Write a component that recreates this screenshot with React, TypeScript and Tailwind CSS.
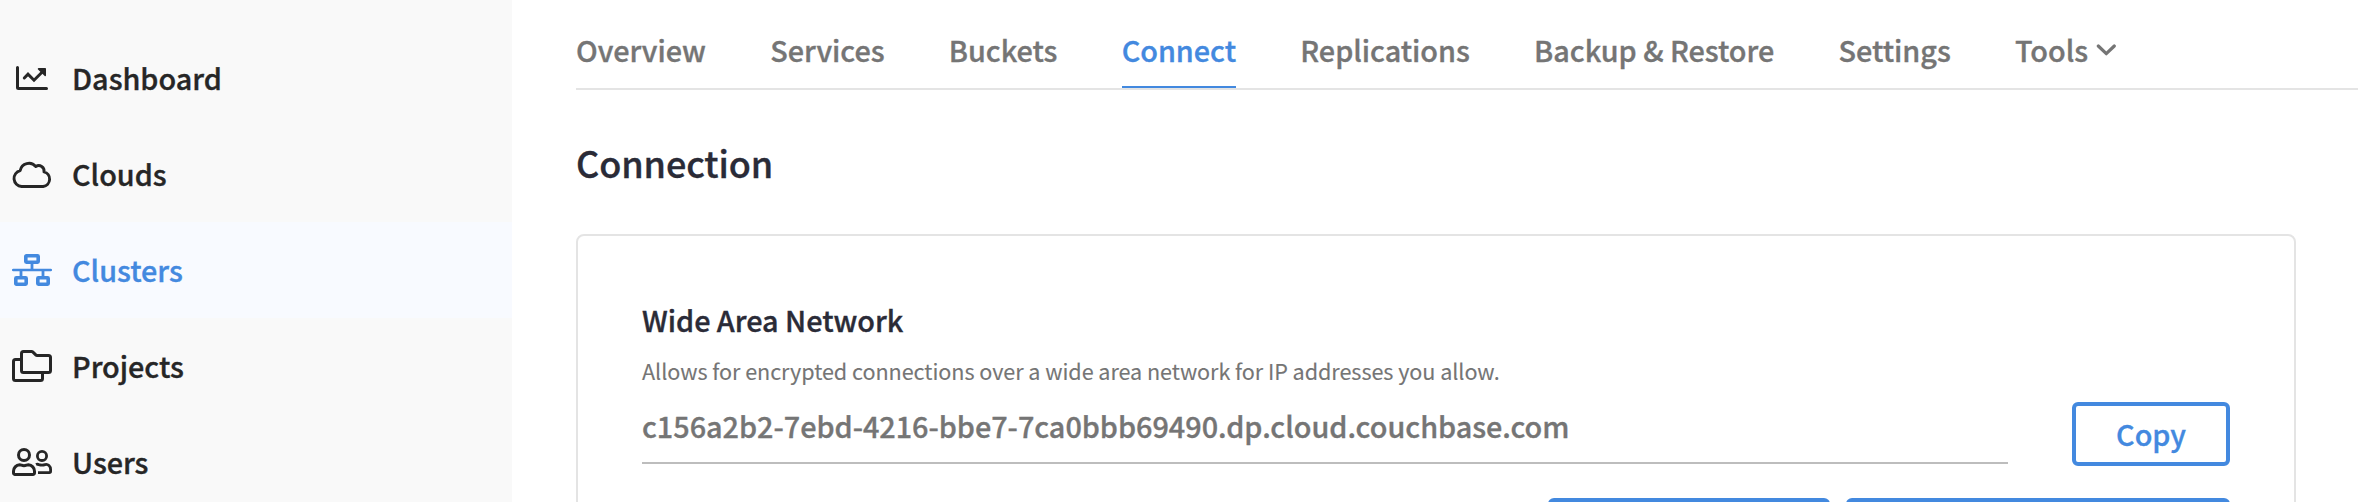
import type { ReactNode } from "react";

function DashboardIcon() {
  return (
    <svg width="32" height="24" viewBox="0 0 32 24" fill="none" stroke="currentColor" strokeWidth="3" strokeLinecap="round" strokeLinejoin="round">
      <path d="M1.5 1.5V21.500a1 1 0 0 0 1 1H30.500" />
      <path d="M8.300 12 12 8.200l6 6L27 5.200" strokeLinejoin="miter" />
      <path d="M22.600 2h6.600a.8.8 0 0 1 .8.8v6.800c0 .7-.8 1-1.300.5l-6.700-6.700c-.5-.5-.1-1.400.600-1.400z" fill="currentColor" stroke="none" />
    </svg>
  );
}

function CloudIcon() {
  return (
    <svg width="40" height="28" viewBox="0 0 40 28" fill="none" stroke="currentColor" strokeWidth="2.9" strokeLinejoin="round">
      <path d="M9.600 26.500A8.070 8.070 0 0 1 8.200 10.600A8.900 8.900 0 0 1 23.800 6.600A5.300 5.300 0 0 1 32 11.900A7.450 7.450 0 0 1 31.200 26.500Z" />
    </svg>
  );
}

function ClustersIcon() {
  return (
    <svg width="40" height="32" viewBox="0 0 40 32" fill="none" stroke="currentColor" strokeWidth="3.6">
      <rect x="13.8" y="1.8" width="12.4" height="6.4" rx="0.6" />
      <rect x="3.8" y="23.8" width="10.4" height="6.4" rx="0.6" />
      <rect x="25.8" y="23.8" width="10.4" height="6.4" rx="0.6" />
      <path d="M20 10v5M9 16v7M31 16v7" strokeWidth="2.8" />
      <path d="M1.200 16h37.600" strokeWidth="2.6" strokeLinecap="round" />
    </svg>
  );
}

function ProjectsIcon() {
  return (
    <svg width="40" height="32" viewBox="0 0 40 32" fill="none" stroke="currentColor" strokeWidth="3" strokeLinejoin="round">
      <path d="M11.500 1.500h8.200a1.500 1.500 0 0 1 1 .4l3.300 3.200a1.500 1.500 0 0 0 1 .4h11.500a2 2 0 0 1 2 2v13a2 2 0 0 1-2 2h-25a2 2 0 0 1-2-2v-17a2 2 0 0 1 2-2z" />
      <path d="M8.500 9.500h-5a2 2 0 0 0-2 2v17a2 2 0 0 0 2 2h25a2 2 0 0 0 2-2V23.500" />
    </svg>
  );
}

function UsersIcon() {
  return (
    <svg width="40" height="28" viewBox="0 0 40 28" fill="none" stroke="currentColor" strokeWidth="3" strokeLinejoin="round">
      <circle cx="12" cy="7" r="5.5" />
      <path d="M3 26.500h18a1.500 1.500 0 0 0 1.500-1.500v-1.600a6.500 6.500 0 0 0-6.100-6.600c-1.600 0-2.200.9-4.400.9s-2.800-.9-4.400-.9a6.500 6.500 0 0 0-6.100 6.600V25a1.500 1.500 0 0 0 1.500 1.500z" />
      <circle cx="30" cy="7.900" r="4.600" strokeWidth="2.8" />
      <path d="M24 16.600c.8-.4 1.900-.4 2.900 0 2 .7 4.200.7 6.200 0 3-.8 5.500 1.800 5.500 4.800v1.900a1.300 1.300 0 0 1-1.300 1.300H26" strokeWidth="2.8" />
    </svg>
  );
}

const navItems: { label: string; icon: ReactNode; active?: boolean }[] = [
  { label: "Dashboard", icon: <DashboardIcon /> },
  { label: "Clouds", icon: <CloudIcon /> },
  { label: "Clusters", icon: <ClustersIcon />, active: true },
  { label: "Projects", icon: <ProjectsIcon /> },
  { label: "Users", icon: <UsersIcon /> },
];

const tabs = ["Overview", "Services", "Buckets", "Connect", "Replications", "Backup & Restore", "Settings"];

function Sidebar() {
  return (
    <aside className="w-[512px] shrink-0 bg-[#f9f9f9] pt-[30px]">
      {navItems.map((item) => (
        <a
          key={item.label}
          className={
            item.active
              ? "flex h-24 items-center gap-5 bg-[#f8faff] pl-3 text-[#4389df]"
              : "flex h-24 items-center gap-5 pl-3 text-[#262626]"
          }
        >
          <span className="flex w-10 justify-center">{item.icon}</span>
          <span className="-mt-px leading-[41px]">{item.label}</span>
        </a>
      ))}
    </aside>
  );
}

function Tabs() {
  return (
    <nav className="flex gap-[64.25px] border-b-2 border-[#e4e4e4] pt-[29px] leading-[41px] text-[#757575]">
      {tabs.map((tab) => (
        <a
          key={tab}
          className={
            tab === "Connect"
              ? "border-b-2 border-[#4389df] pb-4 whitespace-nowrap text-[#4389df]"
              : "border-b-2 border-transparent pb-4 whitespace-nowrap"
          }
        >
          {tab}
        </a>
      ))}
      <a className="flex border-b-2 border-transparent pb-4">
        Tools
        <svg className="mt-[15px] ml-2" width="20" height="12" viewBox="0 0 20 12" fill="none" stroke="currentColor" strokeWidth="3.2" strokeLinecap="round" strokeLinejoin="round">
          <path d="M2.300 2 10.300 9.700 18.300 2" />
        </svg>
      </a>
    </nav>
  );
}

export default function App() {
  return (
    <div className="flex h-[502px] overflow-hidden bg-white font-['Noto_Sans_CJK_SC','Source_Sans_Pro',sans-serif] text-[28.8px] font-medium tracking-[-0.018px] [-webkit-text-stroke:0.35px_currentColor]">
      <Sidebar />
      <main className="min-w-0 grow pl-16">
        <Tabs />
        <h1 className="mt-[46px] text-[36px] leading-[52px] tracking-[-0.1px] text-[#2a2b37]">Connection</h1>
        <section className="mt-[46px] h-[600px] w-[1720px] rounded-lg border-2 border-[#e4e4e4] px-16 pt-[63px]">
          <h2 className="leading-[41px] text-[#2a2b37]">Wide Area Network</h2>
          <p className="mt-[15px] text-[21.6px] leading-[31px] font-normal tracking-[-0.055px] text-[#757575] [-webkit-text-stroke:0.1px_currentColor]">
            Allows for encrypted connections over a wide area network for IP addresses you allow.
          </p>
          <div className="mt-4 flex items-start gap-16">
            <div className="grow border-b-2 border-[#bdbdbd] pt-[3px] pb-4 leading-[41px] text-[#757575]">
              c156a2b2-7ebd-4216-bbe7-7ca0bbb69490.dp.cloud.couchbase.com
            </div>
            <button className="h-16 w-[158px] rounded-md border-4 border-[#4389df] pb-px leading-[41px] text-[#4389df]">
              Copy
            </button>
          </div>
          <div className="mt-8 flex justify-end gap-4">
            <button className="h-16 w-[282px] rounded-md border-4 border-[#4389df]" />
            <button className="h-16 w-[384px] rounded-md border-4 border-[#4389df]" />
          </div>
        </section>
      </main>
    </div>
  );
}
